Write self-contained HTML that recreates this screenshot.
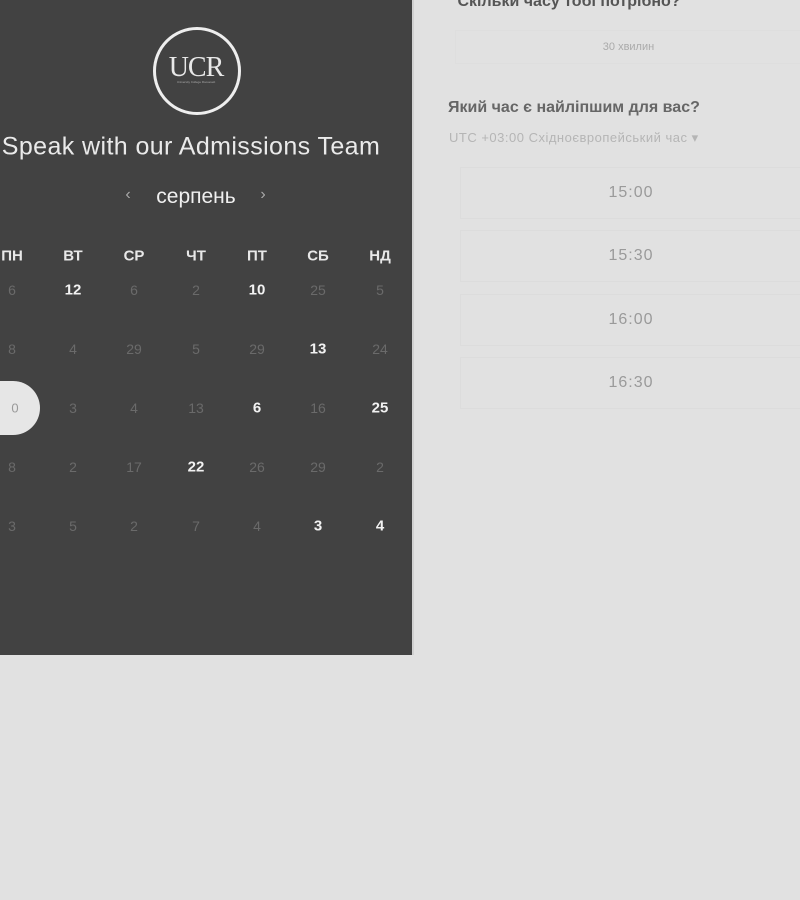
<!DOCTYPE html>
<html><head><meta charset="utf-8"><style>
body{margin:0;width:800px;height:900px;background:#e1e1e1;position:relative;overflow:hidden;font-family:"Liberation Sans",sans-serif}
.p{position:absolute;left:0;top:0;width:412px;height:655px;background:#424242;border-right:2px solid #d0d0d0;overflow:hidden}
.a{position:absolute;transform:translate(-50%,-50%);white-space:nowrap}
.h{color:#e8e8e8;font-weight:bold;font-size:15px}
.d{color:#6a6a6a;font-size:14px}
.w{color:#f2f2f2;font-size:15px;font-weight:bold}
.t{position:absolute;left:460px;width:340px;height:50px;border:1px solid #dcdcdc;border-right:none;text-align:center;line-height:50px;color:#9a9a9a;font-size:16px;letter-spacing:1px}
</style></head><body>
<div class="p">
<div style="position:absolute;left:153px;top:27px;width:82px;height:82px;border:3px solid #eee;border-radius:50%"></div>
<div class="a" style="left:196px;top:68px;color:#e8e8e8;font-family:'Liberation Serif',serif;font-size:28px;letter-spacing:-1px">UCR</div>
<div class="a" style="left:196px;top:82px;color:#aaa;font-size:3px">University College Roosevelt</div>
<div class="a" style="left:191px;top:147px;color:#eaeaea;font-size:25px;letter-spacing:0.4px">Speak with our Admissions Team</div>
<div class="a" style="left:128px;top:195px;color:#aaa;font-size:16px">‹</div>
<div class="a" style="left:196px;top:197px;color:#f0f0f0;font-size:21px">серпень</div>
<div class="a" style="left:263px;top:195px;color:#aaa;font-size:16px">›</div>
<div style="position:absolute;left:-30px;top:381px;width:70px;height:54px;border-radius:27px;background:#e6e6e6"></div>
<div class="a" style="left:15px;top:408px;color:#999;font-size:13px">0</div>
</div>
<div id="cal"></div>
<div class="a" style="left:569px;top:2px;color:#555;font-size:16px;font-weight:bold">Скільки часу тобі потрібно?</div>
<div style="position:absolute;left:455px;top:30px;width:345px;height:32px;border:1px solid #dedede;border-right:none;text-align:center;line-height:32px;color:#aaa;font-size:11px">30 хвилин</div>
<div style="position:absolute;left:448px;top:99px;color:#666;font-size:16px;font-weight:bold">Який час є найліпшим для вас?</div>
<div style="position:absolute;left:449px;top:130px;color:#b5b5b5;font-size:13px;letter-spacing:.5px">UTC +03:00 Східноєвропейський час ▾</div>
<div class="t" style="top:167px">15:00</div>
<div class="t" style="top:230px">15:30</div>
<div class="t" style="top:294px">16:00</div>
<div class="t" style="top:357px">16:30</div>
<script>
var xs=[12,73,134,196,257,318,380],ys=[290,349,408,467,526];
var hd=["ПН","ВТ","СР","ЧТ","ПТ","СБ","НД"];
var r=[["6","*12","6","2","*10","25","5"],["8","4","29","5","29","*13","24"],["","3","4","13","*6","16","*25"],["8","2","17","*22","26","29","2"],["3","5","2","7","4","*3","*4"]];
var s="";
hd.forEach(function(h,i){s+='<div class="a h" style="left:'+xs[i]+'px;top:256px">'+h+'</div>'});
r.forEach(function(row,j){row.forEach(function(v,i){if(!v)return;var w=v[0]=="*";s+='<div class="a '+(w?'w':'d')+'" style="left:'+xs[i]+'px;top:'+ys[j]+'px">'+(w?v.slice(1):v)+'</div>'})});
document.getElementById("cal").innerHTML=s;
</script>
</body></html>
